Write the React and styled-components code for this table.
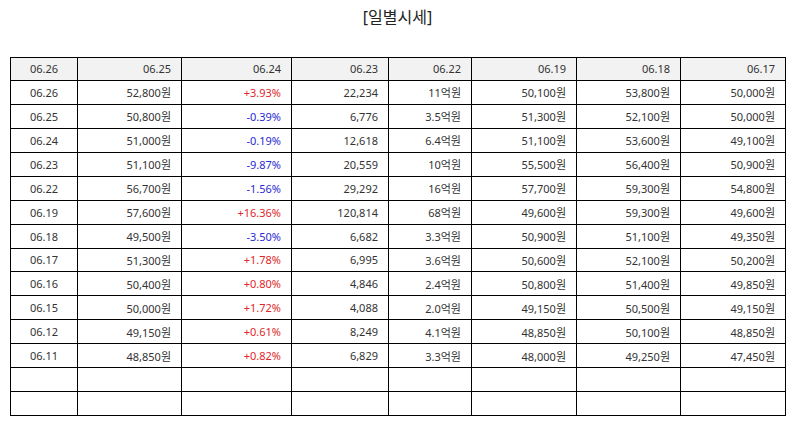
import React from 'react';
import styled, { createGlobalStyle } from 'styled-components';

const GlobalStyle = createGlobalStyle`
  html, body {
    margin: 0;
    padding: 0;
    background: #fff;
  }
  body {
    font-family: "Noto Sans", "Noto Sans CJK KR", sans-serif;
  }
`;

const columns = [67, 104, 110, 97, 83, 105, 104, 105];
const headers = ['06.26', '06.25', '06.24', '06.23', '06.22', '06.19', '06.18', '06.17'];

const rows = [
  ['06.26', '52,800원', '+3.93%', '22,234', '11억원', '50,100원', '53,800원', '50,000원'],
  ['06.25', '50,800원', '-0.39%', '6,776', '3.5억원', '51,300원', '52,100원', '50,000원'],
  ['06.24', '51,000원', '-0.19%', '12,618', '6.4억원', '51,100원', '53,600원', '49,100원'],
  ['06.23', '51,100원', '-9.87%', '20,559', '10억원', '55,500원', '56,400원', '50,900원'],
  ['06.22', '56,700원', '-1.56%', '29,292', '16억원', '57,700원', '59,300원', '54,800원'],
  ['06.19', '57,600원', '+16.36%', '120,814', '68억원', '49,600원', '59,300원', '49,600원'],
  ['06.18', '49,500원', '-3.50%', '6,682', '3.3억원', '50,900원', '51,100원', '49,350원'],
  ['06.17', '51,300원', '+1.78%', '6,995', '3.6억원', '50,600원', '52,100원', '50,200원'],
  ['06.16', '50,400원', '+0.80%', '4,846', '2.4억원', '50,800원', '51,400원', '49,850원'],
  ['06.15', '50,000원', '+1.72%', '4,088', '2.0억원', '49,150원', '50,500원', '49,150원'],
  ['06.12', '49,150원', '+0.61%', '8,249', '4.1억원', '48,850원', '50,100원', '48,850원'],
  ['06.11', '48,850원', '+0.82%', '6,829', '3.3억원', '48,000원', '49,250원', '47,450원'],
];

const toneOf = (text) => {
  if (text.startsWith('+')) return 'up';
  if (text.startsWith('-')) return 'down';
  return 'plain';
};

const App = () => {
  return (
    <Page>
      <GlobalStyle />
      <Title>[일별시세]</Title>
      <Table>
        <colgroup>
          {columns.map((w, i) => (
            <col key={i} style={{ width: w }} />
          ))}
        </colgroup>
        <thead>
          <tr>
            {headers.map((h, i) => (
              <HeadCell key={i} first={i === 0}>{h}</HeadCell>
            ))}
          </tr>
        </thead>
        <tbody>
          {rows.map((row, r) => (
            <tr key={r}>
              {row.map((cell, i) => (
                <Cell key={i} first={i === 0} tone={i === 2 ? toneOf(cell) : 'plain'}>
                  {cell}
                </Cell>
              ))}
            </tr>
          ))}
          {[0, 1].map((r) => (
            <tr key={'empty' + r}>
              {columns.map((_, i) => (
                <Cell key={i} first={i === 0} tone="plain" />
              ))}
            </tr>
          ))}
        </tbody>
      </Table>
    </Page>
  );
};

const Page = styled.div`
  width: 794px;
  padding: 0 9px 0 10px;
  box-sizing: border-box;
`;

const Title = styled.div`
  height: 57px;
  padding-top: 6px;
  box-sizing: border-box;
  text-align: center;
  font-size: 16px;
  line-height: 22px;
  color: #222;
`;

const Table = styled.table`
  width: 775px;
  border-collapse: collapse;
  table-layout: fixed;
  font-size: 11px;
  color: #333;
`;

const HeadCell = styled.th`
  height: 22.95px;
  padding: 0 10px;
  border: 1px solid #000;
  background: #f2f2f2;
  font-weight: normal;
  text-align: ${(props) => (props.first ? 'center' : 'right')};
  box-sizing: border-box;
`;

const Cell = styled.td`
  height: 22.95px;
  padding: 0 10px;
  border: 1px solid #000;
  text-align: ${(props) => (props.first ? 'center' : 'right')};
  color: ${(props) =>
    props.tone === 'up' ? '#e0262b' : props.tone === 'down' ? '#2a2ad0' : '#333'};
  white-space: nowrap;
`;

export default App;
